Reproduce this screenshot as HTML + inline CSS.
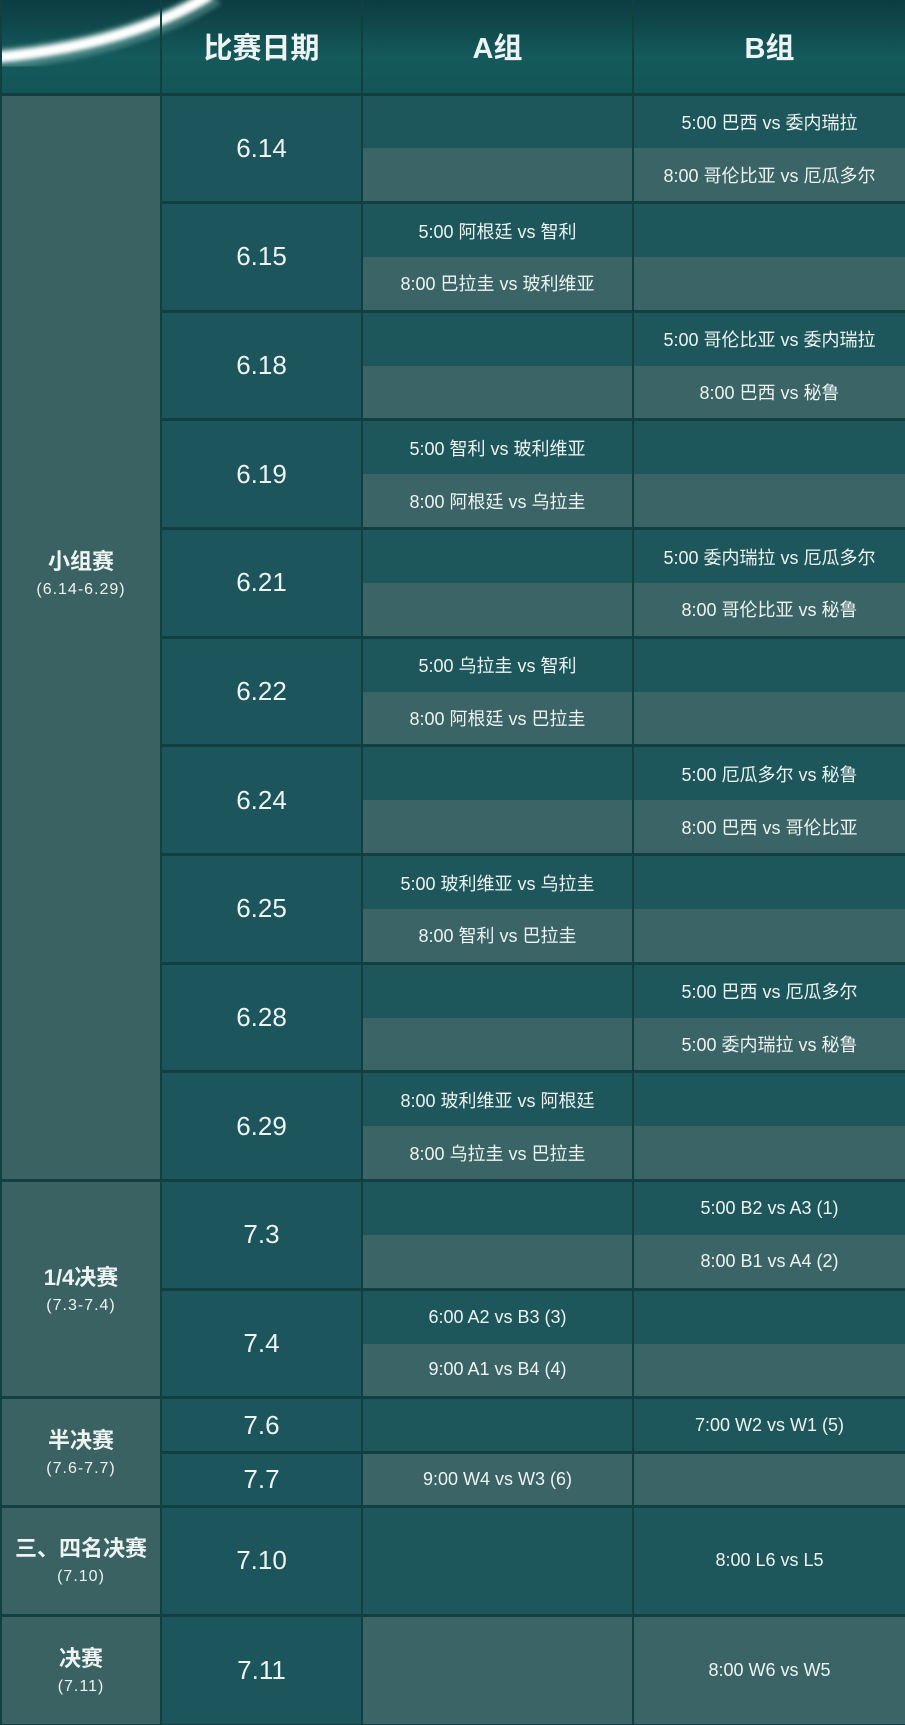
<!DOCTYPE html>
<html><head><meta charset="utf-8"><style>
*{margin:0;padding:0;box-sizing:border-box}
body{width:905px;height:1725px;background:#123f42;overflow:hidden;font-family:"Liberation Sans","Noto Sans CJK SC",sans-serif;color:#eef3f3;position:relative}
table{border-collapse:collapse;table-layout:fixed;width:905px;position:absolute;top:0;left:0}
td{text-align:center;vertical-align:middle;padding:0;border-left:2px solid #123f42;border-right:2px solid #123f42}
tr.h td{height:94px;background:transparent;font-size:29px;font-weight:bold;border-bottom:3px solid #123f42}
tr.s td{height:54.33px}
tr.f td{height:108.67px}
tr.t td.x{border-top:3px solid #123f42}
.g{background:#3a6263;font-weight:bold;font-size:22px;line-height:1.45;border-top:3px solid #123f42}
.g small{display:block;font-weight:normal;font-size:16px;letter-spacing:1px}
.d{background:#1c555b;font-size:26px;border-top:3px solid #123f42}
.k{background:#1d575c;font-size:18px}
.l{background:#3a6465;font-size:18px}
.hd{position:absolute;top:0;left:0;width:905px;height:94px;background:linear-gradient(#0c3c40,#14595b 60%,#145658)}
</style></head><body>
<div class="hd"><svg width="905" height="94" style="position:absolute;left:0;top:0">
<defs><filter id="b"><feGaussianBlur stdDeviation="2"/></filter></defs>
<path d="M-10 60 Q130 48 215 -5" stroke="#8fc9c2" stroke-width="22" fill="none" opacity=".35" filter="url(#b)"/>
<path d="M-10 58 Q128 46 210 -5" stroke="#ffffff" stroke-width="11" fill="none" filter="url(#b)"/>
</svg></div>
<table>
<colgroup><col style="width:160px"><col style="width:201px"><col style="width:271px"><col style="width:273px"></colgroup>
<tr class="h"><td></td><td>比赛日期</td><td>A组</td><td>B组</td></tr>

<tr class="s t"><td class="g" rowspan="20" style="padding-bottom:128px">小组赛<small>(6.14-6.29)</small></td><td class="d" rowspan="2">6.14</td><td class="k x"></td><td class="k x">5:00 巴西 vs 委内瑞拉</td></tr>
<tr class="s"><td class="l"></td><td class="l">8:00 哥伦比亚 vs 厄瓜多尔</td></tr>
<tr class="s t"><td class="d" rowspan="2">6.15</td><td class="k x">5:00 阿根廷 vs 智利</td><td class="k x"></td></tr>
<tr class="s"><td class="l">8:00 巴拉圭 vs 玻利维亚</td><td class="l"></td></tr>
<tr class="s t"><td class="d" rowspan="2">6.18</td><td class="k x"></td><td class="k x">5:00 哥伦比亚 vs 委内瑞拉</td></tr>
<tr class="s"><td class="l"></td><td class="l">8:00 巴西 vs 秘鲁</td></tr>
<tr class="s t"><td class="d" rowspan="2">6.19</td><td class="k x">5:00 智利 vs 玻利维亚</td><td class="k x"></td></tr>
<tr class="s"><td class="l">8:00 阿根廷 vs 乌拉圭</td><td class="l"></td></tr>
<tr class="s t"><td class="d" rowspan="2">6.21</td><td class="k x"></td><td class="k x">5:00 委内瑞拉 vs 厄瓜多尔</td></tr>
<tr class="s"><td class="l"></td><td class="l">8:00 哥伦比亚 vs 秘鲁</td></tr>
<tr class="s t"><td class="d" rowspan="2">6.22</td><td class="k x">5:00 乌拉圭 vs 智利</td><td class="k x"></td></tr>
<tr class="s"><td class="l">8:00 阿根廷 vs 巴拉圭</td><td class="l"></td></tr>
<tr class="s t"><td class="d" rowspan="2">6.24</td><td class="k x"></td><td class="k x">5:00 厄瓜多尔 vs 秘鲁</td></tr>
<tr class="s"><td class="l"></td><td class="l">8:00 巴西 vs 哥伦比亚</td></tr>
<tr class="s t"><td class="d" rowspan="2">6.25</td><td class="k x">5:00 玻利维亚 vs 乌拉圭</td><td class="k x"></td></tr>
<tr class="s"><td class="l">8:00 智利 vs 巴拉圭</td><td class="l"></td></tr>
<tr class="s t"><td class="d" rowspan="2">6.28</td><td class="k x"></td><td class="k x">5:00 巴西 vs 厄瓜多尔</td></tr>
<tr class="s"><td class="l"></td><td class="l">5:00 委内瑞拉 vs 秘鲁</td></tr>
<tr class="s t"><td class="d" rowspan="2">6.29</td><td class="k x">8:00 玻利维亚 vs 阿根廷</td><td class="k x"></td></tr>
<tr class="s"><td class="l">8:00 乌拉圭 vs 巴拉圭</td><td class="l"></td></tr>

<tr class="s t"><td class="g" rowspan="4">1/4决赛<small>(7.3-7.4)</small></td><td class="d" rowspan="2">7.3</td><td class="k x"></td><td class="k x">5:00 B2 vs A3 (1)</td></tr>
<tr class="s"><td class="l"></td><td class="l">8:00 B1 vs A4 (2)</td></tr>
<tr class="s t"><td class="d" rowspan="2">7.4</td><td class="k x">6:00 A2 vs B3 (3)</td><td class="k x"></td></tr>
<tr class="s"><td class="l">9:00 A1 vs B4 (4)</td><td class="l"></td></tr>

<tr class="s t"><td class="g" rowspan="2">半决赛<small>(7.6-7.7)</small></td><td class="d">7.6</td><td class="k x"></td><td class="k x">7:00 W2 vs W1 (5)</td></tr>
<tr class="s t"><td class="d">7.7</td><td class="l x">9:00 W4 vs W3 (6)</td><td class="l x"></td></tr>

<tr class="f t"><td class="g">三、四名决赛<small>(7.10)</small></td><td class="d">7.10</td><td class="k x"></td><td class="k x">8:00 L6 vs L5</td></tr>
<tr class="f t"><td class="g">决赛<small>(7.11)</small></td><td class="d">7.11</td><td class="l x"></td><td class="l x">8:00 W6 vs W5</td></tr>
</table>
</body></html>
